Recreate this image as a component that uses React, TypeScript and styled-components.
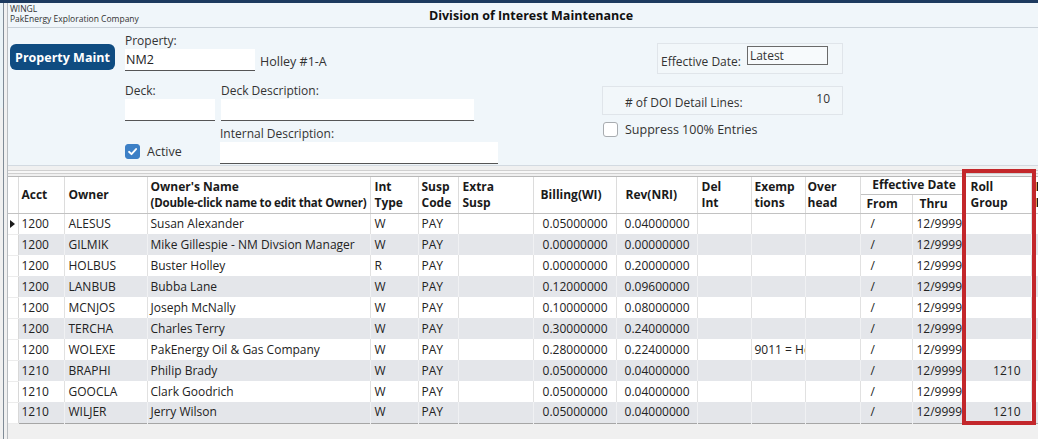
import React from 'react';
import styled, { createGlobalStyle } from 'styled-components';

const GlobalStyle = createGlobalStyle`
  html, body { margin: 0; padding: 0; background: #f0f0f0; }
  body { font-family: "Open Sans", "Noto Sans", sans-serif; color: #222; }
  * { box-sizing: border-box; }
`;

const Screen = styled.div`
  position: relative;
  width: 1038px;
  height: 439px;
  overflow: hidden;
  display: flex;
  flex-direction: column;
  background: #f0f0f0;
`;

const TopBar = styled.div`
  height: 3px;
  flex: none;
  background: #1d3a5f;
`;

const Body = styled.div`
  flex: 1;
  display: flex;
  min-height: 0;
`;

const LeftRail = styled.div`
  width: 8px;
  flex: none;
  background: #f0f0f0;
  border-right: 1px solid #b8bcc0;
`;

const RailSliver = styled.div`
  width: 4px;
  height: 100%;
  background: linear-gradient(#eaf3f7 0 105px, #f0f0f0 105px);
  border-right: 1px solid #7f8b96;
`;

const Main = styled.div`
  flex: 1;
  display: flex;
  flex-direction: column;
  min-width: 0;
`;

const Header = styled.header`
  height: 25px;
  flex: none;
  display: grid;
  grid-template-columns: 1fr auto 1fr;
  align-items: center;
  padding-left: 2px;
  background: #f0f6fa;
  border-bottom: 1px solid #c9d1d8;
`;

const Company = styled.div`
  font-size: 8.5px;
  line-height: 10px;
  color: #333;
  align-self: start;
  padding-top: 1px;
`;

const Title = styled.h1`
  margin: 0 0 0 14px;
  font-size: 12.5px;
  font-weight: 700;
  color: #111;
`;

const FormPanel = styled.section`
  height: 138px;
  flex: none;
  display: flex;
  padding: 5px 195px 0 2px;
  background: #f0f6fa;
  border-bottom: 1px solid #d3dae1;
`;

const MaintButton = styled.button`
  width: 105px;
  height: 26px;
  margin-top: 11px;
  border: none;
  border-radius: 6px;
  background: #0f4c81;
  color: #fff;
  font-family: inherit;
  font-size: 12.5px;
  font-weight: 700;
  padding: 0;
`;

const Fields = styled.div`
  margin-left: 10px;
  display: flex;
  flex-direction: column;
`;

const Label = styled.div<{ $top?: number }>`
  font-size: 12px;
  line-height: 16px;
  height: 16px;
  color: #333;
  white-space: nowrap;
  margin-top: ${(p) => p.$top ?? 0}px;
`;

const Row = styled.div<{ $gap?: number; $align?: string }>`
  display: flex;
  gap: ${(p) => p.$gap ?? 0}px;
  align-items: ${(p) => p.$align ?? 'flex-start'};
`;

const Stack = styled.div`
  display: flex;
  flex-direction: column;
`;

const TextInput = styled.input<{ $w: number }>`
  width: ${(p) => p.$w}px;
  height: 22px;
  border: none;
  border-bottom: 1px solid #555;
  background: #fff;
  padding: 0 1px;
  font-family: inherit;
  font-size: 12.5px;
  color: #222;
  outline: none;
`;

const PropName = styled.span`
  font-size: 12.5px;
  line-height: 22px;
  margin-left: 5px;
  padding-top: 2px;
  color: #333;
`;

const Check = styled.span<{ $on?: boolean }>`
  width: 15px;
  height: 15px;
  flex: none;
  border-radius: 3px;
  display: inline-flex;
  align-items: center;
  justify-content: center;
  background: ${(p) => (p.$on ? '#3d80c6' : '#fff')};
  border: 1px solid ${(p) => (p.$on ? '#3d80c6' : '#a8acb0')};
`;

const CheckLabel = styled.label<{ $w?: number }>`
  display: flex;
  align-items: center;
  gap: 7px;
  font-size: 12.5px;
  color: #333;
  width: ${(p) => (p.$w ? `${p.$w}px` : 'auto')};
`;

const Side = styled.div`
  margin-left: auto;
  width: 241px;
  display: flex;
  flex-direction: column;
  align-items: flex-end;
`;

const InfoBox = styled.div<{ $w: number; $h: number; $top: number }>`
  width: ${(p) => p.$w}px;
  height: ${(p) => p.$h}px;
  margin-top: ${(p) => p.$top}px;
  display: flex;
  align-items: center;
  border: 1px solid #e0e5ea;
  background: #f2f7fa;
  font-size: 12px;
  color: #333;
`;

const BoxText = styled.span<{ $left: number; $top: number }>`
  margin-left: ${(p) => p.$left}px;
  margin-top: ${(p) => p.$top}px;
`;

const DateInput = styled.div`
  width: 81px;
  height: 19px;
  margin: -7px 0 0 6px;
  border: 1px solid #6a6a6a;
  background: #f7fafc;
  font-size: 12px;
  line-height: 17px;
  padding-left: 2px;
`;

const Count = styled.span`
  margin-left: auto;
  margin-right: 12px;
  margin-top: -4px;
`;

const SuppressRow = styled(CheckLabel)`
  align-self: flex-start;
  margin-top: 6px;
  margin-left: 1px;
`;

const Splitter = styled.div`
  height: 11px;
  flex: none;
  border-bottom: 1px solid #b8b8b8;
  background: linear-gradient(#f0f0f0 0 4px, #cfcfcf 4px 5px, #f7f7f7 5px 7px, #cfcfcf 7px 8px, #f0f0f0 8px);
`;

const GridArea = styled.div`
  flex: 1;
  overflow: hidden;
  background: #f0f0f0;
`;

const Table = styled.table`
  table-layout: fixed;
  border-collapse: collapse;
  width: 1073px;
  background: #fff;
  border-bottom: 1px solid #a6a6a6;
`;

const HeadRow = styled.tr<{ $h: number }>`
  height: ${(p) => p.$h}px;
`;

const Th = styled.th<{ $pad?: number; $center?: boolean }>`
  font-size: 12px;
  font-weight: 700;
  line-height: 16px;
  padding: 0 0 0 ${(p) => p.$pad ?? 4}px;
  text-align: ${(p) => (p.$center ? 'center' : 'left')};
  vertical-align: middle;
  color: #1a1a1a;
  border-right: 1px solid #dcdcdc;
  border-bottom: 1px solid #c2c2c2;
  white-space: nowrap;
  overflow: hidden;
`;

const SubHint = styled.span`
  font-size: 11.5px;
  letter-spacing: -0.2px;
`;

const Td = styled.td<{ $right?: boolean; $pad?: number }>`
  height: 21px;
  font-size: 12px;
  line-height: 20px;
  padding: ${(p) => (p.$right ? `0 ${p.$pad ?? 8}px 0 0` : `0 0 0 ${p.$pad ?? 4}px`)};
  text-align: ${(p) => (p.$right ? 'right' : 'left')};
  white-space: nowrap;
  overflow: hidden;
  color: #222;
  border-right: 1px solid #e1e1e1;
`;

const DataRow = styled.tr`
  height: 21px;
  &:nth-child(even) td:not(:first-child) {
    background: #e4e6ea;
    border-right-color: #f0f1f3;
  }
`;

const Indicator = styled.td`
  width: 10px;
  padding: 0 0 0 2px;
  background: #fff;
  border-right: 1px solid #d8d8d8;
  border-bottom: 1px solid #ececec;
`;

const Marker = styled.span`
  display: block;
  width: 0;
  height: 0;
  border-top: 4px solid transparent;
  border-bottom: 4px solid transparent;
  border-left: 5px solid #1a1a1a;
`;

const Annotation = styled.div`
  position: absolute;
  left: 962px;
  top: 169px;
  width: 74px;
  height: 256px;
  border: 4px solid #c3272b;
  pointer-events: none;
`;

const colWidths = [10, 46, 83, 223, 48, 40, 75, 83, 81, 54, 54, 55, 52, 52, 67, 50];

type Line = {
  acct: string;
  owner: string;
  name: string;
  type: string;
  bill: string;
  rev: string;
  exempt?: string;
  roll?: string;
};

const lines: Line[] = [
  { acct: '1200', owner: 'ALESUS', name: 'Susan Alexander', type: 'W', bill: '0.05000000', rev: '0.04000000' },
  { acct: '1200', owner: 'GILMIK', name: 'Mike Gillespie - NM Divsion Manager', type: 'W', bill: '0.00000000', rev: '0.00000000' },
  { acct: '1200', owner: 'HOLBUS', name: 'Buster Holley', type: 'R', bill: '0.00000000', rev: '0.20000000' },
  { acct: '1200', owner: 'LANBUB', name: 'Bubba Lane', type: 'W', bill: '0.12000000', rev: '0.09600000' },
  { acct: '1200', owner: 'MCNJOS', name: 'Joseph McNally', type: 'W', bill: '0.10000000', rev: '0.08000000' },
  { acct: '1200', owner: 'TERCHA', name: 'Charles Terry', type: 'W', bill: '0.30000000', rev: '0.24000000' },
  { acct: '1200', owner: 'WOLEXE', name: 'PakEnergy Oil & Gas Company', type: 'W', bill: '0.28000000', rev: '0.22400000', exempt: '9011 = Hold' },
  { acct: '1210', owner: 'BRAPHI', name: 'Philip Brady', type: 'W', bill: '0.05000000', rev: '0.04000000', roll: '1210' },
  { acct: '1210', owner: 'GOOCLA', name: 'Clark Goodrich', type: 'W', bill: '0.05000000', rev: '0.04000000' },
  { acct: '1210', owner: 'WILJER', name: 'Jerry Wilson', type: 'W', bill: '0.05000000', rev: '0.04000000', roll: '1210' },
];

const CheckMark = () => (
  <svg width="11" height="11" viewBox="0 0 12 12">
    <path d="M2.2 6.3 L4.9 8.9 L9.9 3.3" fill="none" stroke="#fff" strokeWidth="2" strokeLinecap="round" strokeLinejoin="round" />
  </svg>
);

const DoiGrid = () => (
  <Table>
    <colgroup>
      {colWidths.map((w, i) => (
        <col key={i} style={{ width: w }} />
      ))}
    </colgroup>
    <thead>
      <HeadRow $h={17}>
        <Th rowSpan={2} $pad={0} />
        <Th rowSpan={2} $pad={3}>Acct</Th>
        <Th rowSpan={2}>Owner</Th>
        <Th rowSpan={2} $pad={3}>
          Owner's Name
          <br />
          <SubHint>(Double-click name to edit that Owner)</SubHint>
        </Th>
        <Th rowSpan={2}>Int<br />Type</Th>
        <Th rowSpan={2} $pad={3}>Susp<br />Code</Th>
        <Th rowSpan={2}>Extra<br />Susp</Th>
        <Th rowSpan={2} $pad={7}>Billing(WI)</Th>
        <Th rowSpan={2} $pad={9}>Rev(NRI)</Th>
        <Th rowSpan={2}>Del<br />Int</Th>
        <Th rowSpan={2} $pad={3}>Exemp<br />tions</Th>
        <Th rowSpan={2} $pad={2}>Over<br />head</Th>
        <Th colSpan={2} $center>Effective Date</Th>
        <Th rowSpan={2} $pad={6}>Roll<br />Group</Th>
        <Th rowSpan={2} $pad={4}>Escrow<br />Int</Th>
      </HeadRow>
      <HeadRow $h={19}>
        <Th $pad={6}>From</Th>
        <Th $pad={7}>Thru</Th>
      </HeadRow>
    </thead>
    <tbody>
      {lines.map((l, i) => (
        <DataRow key={l.owner}>
          <Indicator>{i === 0 && <Marker />}</Indicator>
          <Td $pad={3}>{l.acct}</Td>
          <Td>{l.owner}</Td>
          <Td $pad={3}>{l.name}</Td>
          <Td>{l.type}</Td>
          <Td $pad={3}>PAY</Td>
          <Td />
          <Td $right>{l.bill}</Td>
          <Td $right $pad={7}>{l.rev}</Td>
          <Td />
          <Td $pad={3}>{l.exempt}</Td>
          <Td />
          <Td $pad={10}>/</Td>
          <Td $pad={4}>12/9999</Td>
          <Td $right $pad={10}>{l.roll}</Td>
          <Td />
        </DataRow>
      ))}
    </tbody>
  </Table>
);

export default function App() {
  return (
    <>
      <GlobalStyle />
      <Screen>
        <TopBar />
        <Body>
          <LeftRail>
            <RailSliver />
          </LeftRail>
          <Main>
            <Header>
              <Company>
                WINGL
                <br />
                PakEnergy Exploration Company
              </Company>
              <Title>Division of Interest Maintenance</Title>
              <span />
            </Header>

            <FormPanel>
              <MaintButton>Property Maint</MaintButton>
              <Fields>
                <Label>Property:</Label>
                <Row>
                  <TextInput $w={130} readOnly defaultValue="NM2" />
                  <PropName>Holley #1-A</PropName>
                </Row>
                <Row $gap={6}>
                  <Stack>
                    <Label $top={10}>Deck:</Label>
                    <TextInput $w={90} readOnly defaultValue="" />
                  </Stack>
                  <Stack>
                    <Label $top={10}>Deck Description:</Label>
                    <TextInput $w={253} readOnly defaultValue="" />
                  </Stack>
                </Row>
                <Row $align="flex-end">
                  <CheckLabel $w={95} style={{ marginBottom: 4 }}>
                    <Check $on>
                      <CheckMark />
                    </Check>
                    Active
                  </CheckLabel>
                  <Stack>
                    <Label $top={5}>Internal Description:</Label>
                    <TextInput $w={278} readOnly defaultValue="" />
                  </Stack>
                </Row>
              </Fields>

              <Side>
                <InfoBox $w={186} $h={31} $top={10}>
                  <BoxText $left={3} $top={6}>Effective Date:</BoxText>
                  <DateInput>Latest</DateInput>
                </InfoBox>
                <InfoBox $w={241} $h={29} $top={12}>
                  <BoxText $left={22} $top={4}># of DOI Detail Lines:</BoxText>
                  <Count>10</Count>
                </InfoBox>
                <SuppressRow>
                  <Check />
                  Suppress 100% Entries
                </SuppressRow>
              </Side>
            </FormPanel>

            <Splitter />
            <GridArea>
              <DoiGrid />
            </GridArea>
          </Main>
        </Body>
        <Annotation />
      </Screen>
    </>
  );
}
